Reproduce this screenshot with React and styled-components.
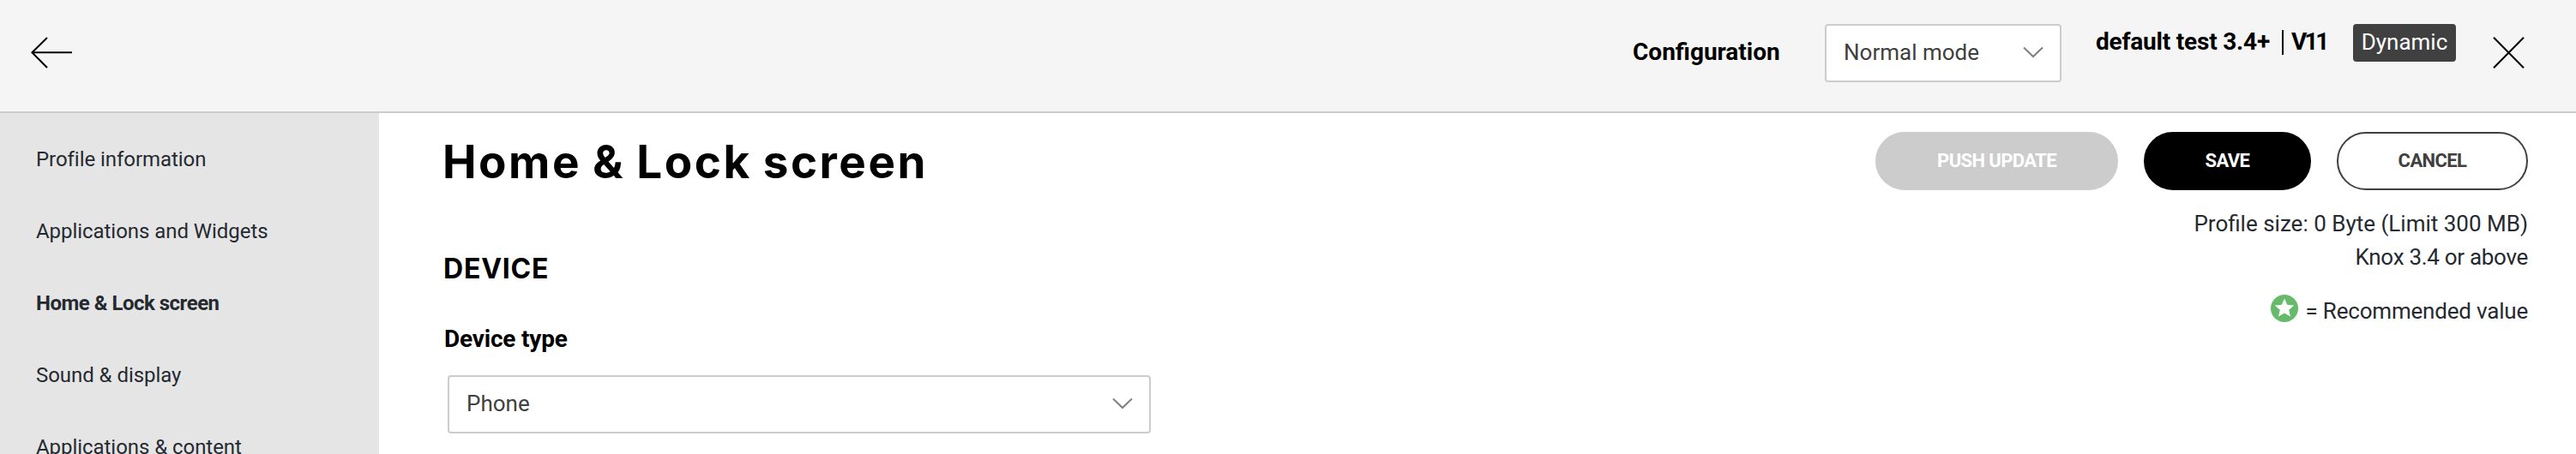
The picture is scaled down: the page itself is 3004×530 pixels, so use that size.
import React from "react";
import styled, { createGlobalStyle } from "styled-components";

const GlobalStyle = createGlobalStyle`
  *, *::before, *::after { box-sizing: border-box; }
  body {
    margin: 0;
    background: #fff;
    color: #252a30;
    font-family: Roboto, "Noto Sans", sans-serif;
    overflow: hidden;
  }
  button { font: inherit; }
`;

const Page = styled.div`
  display: flex;
  flex-direction: column;
  width: 100%;
  height: 530px;
  overflow: hidden;
`;

const Header = styled.header`
  display: flex;
  flex: none;
  align-items: flex-start;
  height: 132px;
  padding: 28px 60px 0 36px;
  background: #f5f5f5;
  border-bottom: 2px solid #ccc;
`;

const IconButton = styled.button`
  display: block;
  padding: 0;
  border: 0;
  background: none;
  color: #000;
  margin-top: ${(p) => p.$top}px;
  margin-left: ${(p) => p.$left || 0}px;
  line-height: 0;
`;

const ConfigLabel = styled.label`
  margin-left: auto;
  width: 224px;
  font-size: 28px;
  font-weight: 700;
  line-height: 66px;
  color: #000;
`;

const SelectBox = styled.div`
  display: flex;
  align-items: center;
  justify-content: space-between;
  width: ${(p) => p.$width}px;
  height: 68px;
  padding: 0 19px 2px 20px;
  border: 2px solid #ccc;
  border-radius: 4px;
  background: #fff;
  color: #404040;
  font-size: 26px;
`;

const ProfileMeta = styled.div`
  display: flex;
  align-items: flex-start;
  width: 420px;
  margin-left: 40px;
  color: #000;
  font-size: 28px;
  font-weight: 700;
  line-height: 41px;
  white-space: nowrap;
`;

const ProfileName = styled.span`
  width: 217px;
  letter-spacing: -0.2px;
`;

const Divider = styled.span`
  width: 2px;
  height: 29px;
  margin: 7px 9px 0 0;
  background: #000;
`;

const Version = styled.span`
  letter-spacing: -3px;
`;

const Badge = styled.span`
  width: 120px;
  height: 44px;
  margin-left: auto;
  border-radius: 4px;
  background: #404040;
  color: #fff;
  font-size: 26px;
  font-weight: 400;
  line-height: 43px;
  text-align: center;
`;

const Body = styled.div`
  display: flex;
  flex: 1;
  min-height: 0;
`;

const Sidebar = styled.nav`
  flex: none;
  width: 442px;
  padding: 12px 0 0 42px;
  background: #e5e5e5;
  overflow: hidden;
`;

const NavItem = styled.div`
  height: 84px;
  font-size: 24px;
  font-weight: ${(p) => (p.$active ? 700 : 400)};
  letter-spacing: ${(p) => (p.$active ? "-0.5px" : "-0.05px")};
  line-height: 84px;
  white-space: nowrap;
`;

const Main = styled.main`
  display: flex;
  flex: 1;
  justify-content: space-between;
  padding: 0 56px 0 75px;
`;

const Settings = styled.section`
  display: flex;
  flex-direction: column;
  color: #000;
`;

const Title = styled.h1`
  margin: 0 0 0 -1px;
  font-family: Inter, sans-serif;
  font-size: 53px;
  font-weight: 700;
  letter-spacing: 2.5px;
  word-spacing: -2px;
  line-height: 115px;
`;

const GroupTitle = styled.h2`
  margin: 37px 0 0;
  font-family: Inter, sans-serif;
  font-size: 32px;
  font-weight: 700;
  letter-spacing: 0.8px;
  line-height: 60px;
`;

const FieldLabel = styled.label`
  margin: 32px 0 22px 1px;
  font-size: 28px;
  font-weight: 700;
  letter-spacing: -0.2px;
  line-height: 40px;
`;

const FieldRow = styled.div`
  padding-left: 5px;
`;

const Side = styled.aside`
  display: flex;
  flex-direction: column;
  align-items: flex-end;
  padding-top: 22px;
  font-size: 26px;
  white-space: nowrap;
`;

const Actions = styled.div`
  display: flex;
  gap: 30px;
  margin-bottom: 20px;
`;

const variants = {
  disabled: "background: #ccc; border-color: #ccc; color: #fff;",
  primary: "background: #000; border-color: #000; color: #fff;",
  outline: "background: #fff; border-color: #404040; color: #404040;",
};

const ActionButton = styled.button`
  width: ${(p) => p.$width}px;
  height: 68px;
  padding: 0 0 2px;
  border: 2px solid;
  border-radius: 34px;
  ${(p) => variants[p.$variant]}
  && {
    font-size: 22px;
    font-weight: 700;
    letter-spacing: -0.6px;
  }
`;

const InfoLine = styled.div`
  line-height: 39px;
  letter-spacing: ${(p) => p.$spacing || 0}px;
`;

const Legend = styled.div`
  display: flex;
  align-items: flex-start;
  margin-top: 23px;
  line-height: 40px;
  letter-spacing: -0.2px;

  svg { margin: 1px 9px 0 0; }
`;

const ArrowLeft = () => (
  <svg width="49" height="37" viewBox="0 0 49 37" fill="none" stroke="currentColor" strokeWidth="2">
    <path d="M19 1 L1.4 18.2 L19 36 M1.4 18.2 H48" />
  </svg>
);

const Cross = () => (
  <svg width="37" height="37" viewBox="0 0 37 37" fill="none" stroke="currentColor" strokeWidth="2">
    <path d="M1 .7 L36 36.3 M36 .7 L1 36.3" />
  </svg>
);

const Chevron = () => (
  <svg width="24" height="14" viewBox="0 0 24 14" fill="none" stroke="#808080" strokeWidth="2">
    <path d="M1 1.5 L12 12 L23 1.5" />
  </svg>
);

const Star = () => (
  <svg width="32" height="32" viewBox="0 0 32 32">
    <circle cx="16" cy="16" r="16" fill="#66bb6a" />
    <path
      fill="#fff"
      d="M16 4.5 L19.2 11.8 L27.2 12.6 L21.2 17.8 L23 25.4 L16 21.4 L9 25.4 L10.8 17.8 L4.8 12.6 L12.8 11.8 Z"
    />
  </svg>
);

const navItems = [
  "Profile information",
  "Applications and Widgets",
  "Home & Lock screen",
  "Sound & display",
  "Applications & content",
];

function Select({ value, width }) {
  return (
    <SelectBox $width={width}>
      <span>{value}</span>
      <Chevron />
    </SelectBox>
  );
}

export default function App() {
  return (
    <Page>
      <GlobalStyle />
      <Header>
        <IconButton $top={15} aria-label="Back">
          <ArrowLeft />
        </IconButton>
        <ConfigLabel>Configuration</ConfigLabel>
        <Select value="Normal mode" width={276} />
        <ProfileMeta>
          <ProfileName>default test 3.4+</ProfileName>
          <Divider />
          <Version>V11</Version>
          <Badge>Dynamic</Badge>
        </ProfileMeta>
        <IconButton $top={15} $left={43} aria-label="Close">
          <Cross />
        </IconButton>
      </Header>
      <Body>
        <Sidebar>
          {navItems.map((item) => (
            <NavItem key={item} $active={item === "Home & Lock screen"}>
              {item}
            </NavItem>
          ))}
        </Sidebar>
        <Main>
          <Settings>
            <Title>Home &amp; Lock screen</Title>
            <GroupTitle>DEVICE</GroupTitle>
            <FieldLabel>Device type</FieldLabel>
            <FieldRow>
              <Select value="Phone" width={820} />
            </FieldRow>
          </Settings>
          <Side>
            <Actions>
              <ActionButton $width={283} $variant="disabled">PUSH UPDATE</ActionButton>
              <ActionButton $width={195} $variant="primary">SAVE</ActionButton>
              <ActionButton $width={223} $variant="outline">CANCEL</ActionButton>
            </Actions>
            <InfoLine>Profile size: 0 Byte (Limit 300 MB)</InfoLine>
            <InfoLine $spacing={-0.3}>Knox 3.4 or above</InfoLine>
            <Legend>
              <Star />= Recommended value
            </Legend>
          </Side>
        </Main>
      </Body>
    </Page>
  );
}
